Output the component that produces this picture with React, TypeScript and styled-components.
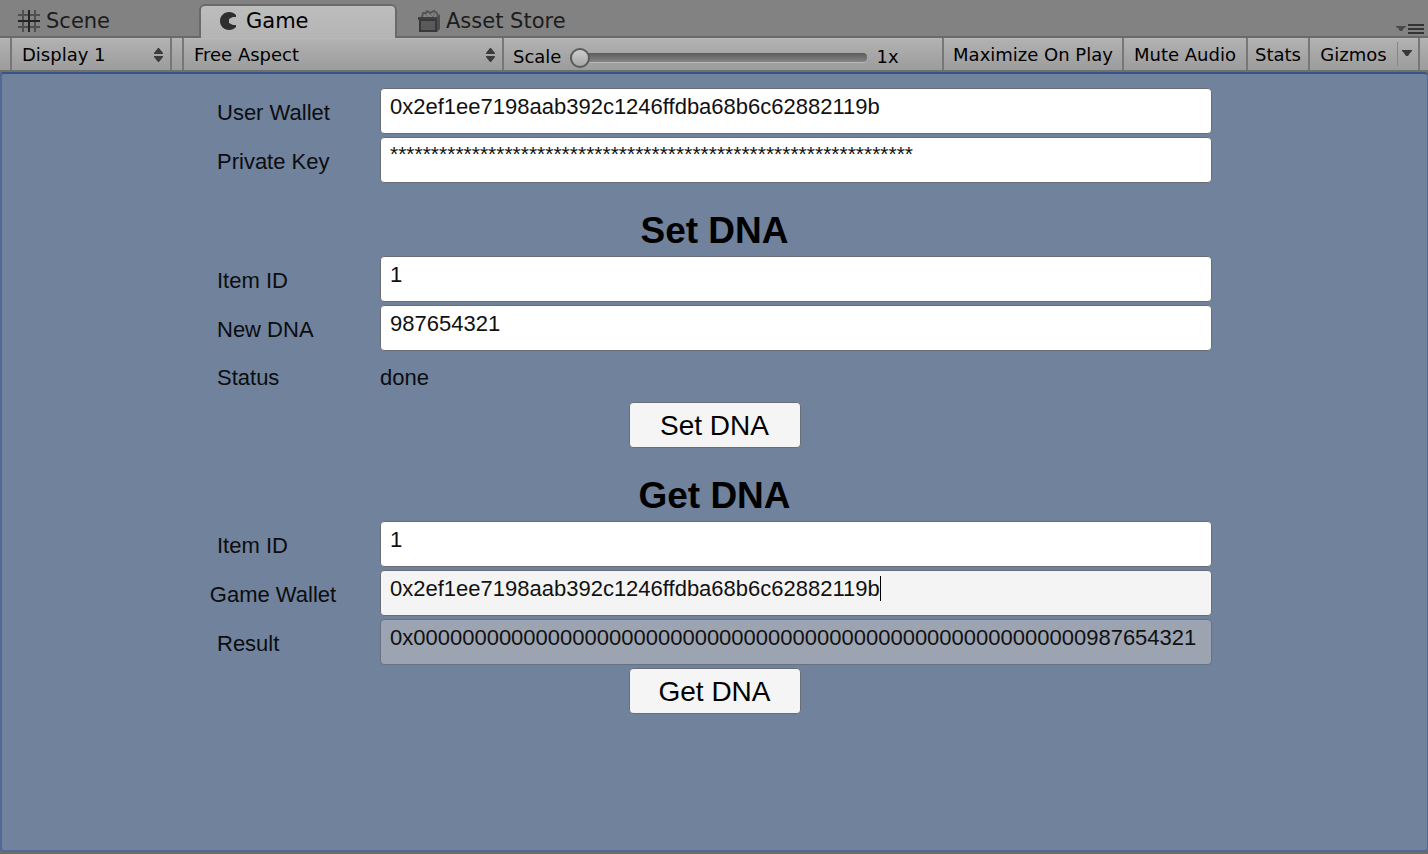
import React from 'react';
import styled, { createGlobalStyle, css } from 'styled-components';

const GlobalStyle = createGlobalStyle`
  *, *::before, *::after { box-sizing: border-box; }
  body { margin: 0; background: #6b6b6b; }
`;

const uiFont = '"DejaVu Sans", Verdana, sans-serif';
const gameFont = '"Liberation Sans", Arial, sans-serif';

const Window = styled.div`
  display: flex;
  flex-direction: column;
  min-height: 100vh;
  padding-bottom: 2px;
  background: #6b6b6b;
  font-family: ${uiFont};
`;

const TabStrip = styled.nav`
  display: flex;
  align-items: flex-end;
  height: 38px;
  background: #828282;
  border-bottom: 2px solid #696969;
`;

const Tab = styled.button<{ $active?: boolean }>`
  display: flex;
  align-items: center;
  gap: 5px;
  width: 198px;
  height: 32px;
  padding: 2px 18px 0;
  border: 0;
  background: transparent;
  color: #1c1c1c;
  font: 21px/30px ${uiFont};
  white-space: nowrap;
  ${p => p.$active && css`
    gap: 8px;
    height: 34px;
    margin: 0 3px -2px 1px;
    padding: 0 19px 2px;
    border: 2px solid #6a6a6a;
    border-bottom: 0;
    border-radius: 6px 6px 0 0;
    background: linear-gradient(#bdbdbd, #b4b4b4);
    color: #000;
  `}
`;

const PaneMenu = styled.button`
  display: flex;
  align-items: center;
  margin-left: auto;
  padding: 0 4px 1px 0;
  border: 0;
  background: transparent;
`;

const Toolbar = styled.div`
  display: flex;
  height: 34px;
  padding-left: 10px;
  background: linear-gradient(#bababa, #b1b1b1 2px, #9c9c9c 32px);
  border-bottom: 2px solid #6f6f6f;
  color: #000;
  font: 18px/30px ${uiFont};
`;

const Picker = styled.div<{ $width: string }>`
  display: flex;
  align-items: center;
  flex: 0 1 ${p => p.$width};
  padding: 2px 6px 0 0;
  border: solid #777;
  border-width: 0 2px;
  margin-right: 10px;

  & + & { margin-right: 0; }
`;

const PickerSelect = styled.select`
  appearance: none;
  flex: 1;
  min-width: 0;
  height: 30px;
  padding: 0 0 0 10px;
  border: 0;
  background: transparent;
  color: inherit;
  font: inherit;
`;

const ScaleGroup = styled.label`
  display: flex;
  align-items: center;
  gap: 9px;
  flex: 1;
  padding: 6px 0 0 9px;
`;

const ScaleRange = styled.input`
  appearance: none;
  width: 297px;
  height: 22px;
  margin: 0;
  background: transparent;

  &::-webkit-slider-runnable-track {
    height: 9px;
    border-radius: 4px;
    background: linear-gradient(#5c5c5c, #848484);
    box-shadow: 0 1px 0 #b8b8b8;
  }
  &::-webkit-slider-thumb {
    appearance: none;
    width: 20px;
    height: 20px;
    margin-top: -5px;
    border: 2px solid #5a5a5a;
    border-radius: 50%;
    background: linear-gradient(#cdcdcd, #a6a6a6);
  }
`;

const ToolButton = styled.button<{ $width: number }>`
  flex: 0 0 ${p => p.$width}px;
  padding: 2px 0 0;
  border: 0;
  border-left: 2px solid #777;
  background: transparent;
  color: inherit;
  font: inherit;
  text-align: center;
  white-space: nowrap;
`;

const GizmoArrow = styled.button`
  display: flex;
  width: 21px;
  margin: 4px 0;
  padding: 8px 0 0 4px;
  border: 0;
  border-left: 1px solid #858585;
  background: transparent;
`;

const ToolbarEnd = styled.div`
  width: 10px;
  border-left: 2px solid #777;
`;

const Stage = styled.main`
  flex: 1;
  padding: 14px 16px;
  background: #70829c;
  border: 2px solid #4f6a97;
  border-top-color: #36558b;
  border-right-width: 1px;
  border-radius: 4px;
  font-family: ${gameFont};
`;

const Form = styled.form`
  display: flex;
  flex-direction: column;
  gap: 3px;
  width: 100%;
  max-width: 995px;
  margin: 0 auto;
`;

const Section = styled.section`
  display: flex;
  flex-direction: column;
  gap: 3px;
  padding-top: 21px;
`;

const Heading = styled.h2`
  height: 46px;
  margin: 0;
  color: #000;
  font-size: 37px;
  line-height: 48px;
  text-align: center;
`;

const Row = styled.div<{ $height?: number }>`
  display: flex;
  align-items: center;
  height: ${p => p.$height ?? 46}px;
  color: #0c0d0f;
  font-size: 22px;
  line-height: 25px;
`;

const Label = styled.label<{ $centered?: boolean }>`
  display: flex;
  flex: 0 0 112px;
  min-width: 0;
  justify-content: ${p => (p.$centered ? 'center' : 'flex-start')};
  margin-right: 51px;
  padding-top: 2px;
  white-space: nowrap;
`;

const Field = styled.div<{ $tone?: 'focus' | 'disabled' }>`
  display: flex;
  flex: 1;
  align-items: flex-start;
  min-width: 0;
  height: 46px;
  padding: 5px 9px;
  border: 1px solid ${p => (p.$tone === 'disabled' ? '#667184' : '#686d76')};
  border-radius: 4px;
  background: ${p => (p.$tone === 'disabled' ? '#9ca3b1' : p.$tone === 'focus' ? '#f4f4f4' : '#fff')};
`;

const TextInput = styled.input<{ $fit?: boolean; $masked?: boolean }>`
  ${p => (p.$fit ? 'field-sizing: content;' : 'flex: 1;')}
  min-width: 0;
  height: ${p => (p.$masked ? 22 : 25)}px;
  padding: 0;
  border: 0;
  outline: 0;
  background: transparent;
  color: #111;
  font-family: ${gameFont};
  font-size: ${p => (p.$masked ? 21 : 22)}px;
  line-height: ${p => (p.$masked ? 22 : 25)}px;
`;

const Caret = styled.span`
  width: 1px;
  height: 25px;
  background: #000;
`;

const Output = styled.output`
  padding-top: 2px;
`;

const ActionButton = styled.button`
  align-self: center;
  width: 172px;
  height: 46px;
  padding: 1px 0 0;
  border: 1px solid #686d76;
  border-radius: 4px;
  background: #f5f5f5;
  color: #000;
  font: 28px/32px ${gameFont};
`;

const GridIcon = () => (
  <svg width="23" height="23" viewBox="0 0 23 23" fill="none" strokeWidth="2" aria-hidden="true">
    <path d="M0 5h22M0 17h22M5 0v22M17 0v22" stroke="#505050" />
    <path d="M0 11h22M11 0v22" stroke="#242424" />
  </svg>
);

const GameIcon = () => (
  <svg width="18" height="18" viewBox="0 0 18 18" aria-hidden="true">
    <path d="M16 3C14 1 12 0 9 0 4 0 0 4 0 9s4 9 9 9c3 0 5-1 7-3v-2h-3l-4-2V7l4-2h3z" fill="#2e2e2e" />
  </svg>
);

const StoreIcon = () => (
  <svg width="23" height="23" viewBox="0 0 23 23" fill="none" aria-hidden="true">
    <path d="M4 7l1-4h3l1-2 3 2 4-2 3 2 1 4" stroke="#555" strokeWidth="2" />
    <path d="M7 4l3 3M12 4l3 3M17 2l-2 5" stroke="#666" strokeWidth="1" />
    <path d="M0 7h19v3H0z" fill="#404040" />
    <path d="M19 7l3-3v15l-3 3z" fill="#4e4e4e" />
    <path d="M2 10h16v11H2z" fill="#5a5a5a" stroke="#383838" strokeWidth="2" />
  </svg>
);

const UpDownIcon = () => (
  <svg width="11" height="14" viewBox="0 0 11 14" fill="#3c3c3c" aria-hidden="true">
    <path d="M5 0h1l4 5v1H1V5zM1 8h9v1l-4 5H5L1 9z" />
  </svg>
);

const DownIcon = () => (
  <svg width="11" height="7" viewBox="0 0 11 7" fill="#383838" aria-hidden="true">
    <path d="M0 0h10v1L8 3 6 6H4L2 3 0 1z" />
  </svg>
);

const MenuIcon = () => (
  <svg width="28" height="11" viewBox="0 0 28 11" aria-hidden="true">
    <path d="M0 2h10v1L8 4 6 7H4L2 4 0 3z" fill="#484848" />
    <path d="M12 0h16v2H12zM12 4h16v2H12zM12 8h16v2H12z" fill="#333" />
  </svg>
);

interface EntryProps {
  id: string;
  label: string;
  value: string;
  tone?: 'focus' | 'disabled';
  centered?: boolean;
  masked?: boolean;
}

function Entry({ id, label, value, tone, centered, masked }: EntryProps) {
  return (
    <Row>
      <Label htmlFor={id} $centered={centered}>{label}</Label>
      <Field $tone={tone}>
        <TextInput
          id={id}
          defaultValue={value}
          readOnly={tone === 'disabled'}
          spellCheck={false}
          autoComplete="off"
          $fit={tone === 'focus'}
          $masked={masked}
        />
        {tone === 'focus' && <Caret />}
      </Field>
    </Row>
  );
}

const wallet = '0x2ef1ee7198aab392c1246ffdba68b6c62882119b';
const result = '0x' + '987654321'.padStart(64, '0');

export default function App() {
  return (
    <Window>
      <GlobalStyle />
      <TabStrip>
        <Tab type="button"><GridIcon />Scene</Tab>
        <Tab type="button" $active><GameIcon />Game</Tab>
        <Tab type="button"><StoreIcon />Asset Store</Tab>
        <PaneMenu type="button" aria-label="Pane options"><MenuIcon /></PaneMenu>
      </TabStrip>
      <Toolbar>
        <Picker $width="162px">
          <PickerSelect aria-label="Display"><option>Display 1</option></PickerSelect>
          <UpDownIcon />
        </Picker>
        <Picker $width="322px">
          <PickerSelect aria-label="Aspect"><option>Free Aspect</option></PickerSelect>
          <UpDownIcon />
        </Picker>
        <ScaleGroup>
          Scale
          <ScaleRange type="range" min="1" max="5" defaultValue="1" />
          <span>1x</span>
        </ScaleGroup>
        <ToolButton type="button" $width={180}>Maximize On Play</ToolButton>
        <ToolButton type="button" $width={124}>Mute Audio</ToolButton>
        <ToolButton type="button" $width={62}>Stats</ToolButton>
        <ToolButton type="button" $width={89}>Gizmos</ToolButton>
        <GizmoArrow type="button" aria-label="Gizmo options"><DownIcon /></GizmoArrow>
        <ToolbarEnd />
      </Toolbar>
      <Stage>
        <Form onSubmit={e => e.preventDefault()}>
          <Entry id="user-wallet" label="User Wallet" value={wallet} />
          <Entry id="private-key" label="Private Key" value={'*'.repeat(64)} masked />
          <Section>
            <Heading>Set DNA</Heading>
            <Entry id="set-item" label="Item ID" value="1" />
            <Entry id="new-dna" label="New DNA" value="987654321" />
            <Row $height={45}>
              <Label htmlFor="status">Status</Label>
              <Output id="status">done</Output>
            </Row>
            <ActionButton type="button">Set DNA</ActionButton>
          </Section>
          <Section>
            <Heading>Get DNA</Heading>
            <Entry id="get-item" label="Item ID" value="1" />
            <Entry id="game-wallet" label="Game Wallet" value={wallet} tone="focus" centered />
            <Entry id="result" label="Result" value={result} tone="disabled" />
            <ActionButton type="button">Get DNA</ActionButton>
          </Section>
        </Form>
      </Stage>
    </Window>
  );
}
